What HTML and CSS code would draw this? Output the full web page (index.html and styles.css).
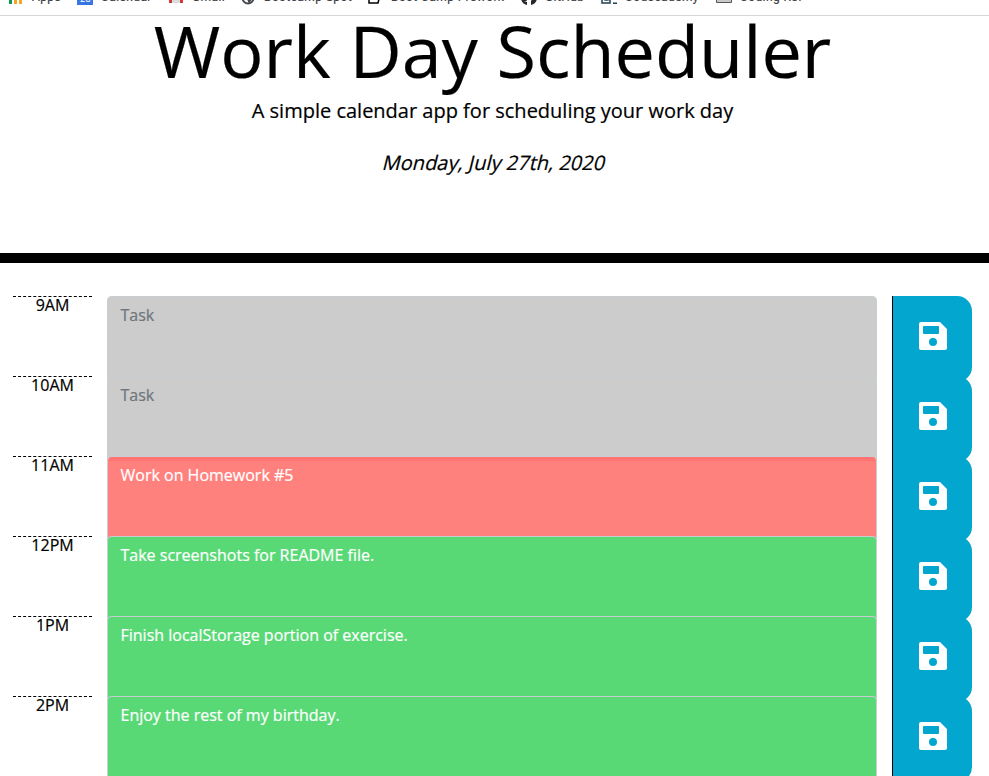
FILE: index.html
```
<!DOCTYPE html>
<html lang="en">
<head>
<meta charset="utf-8">
<title>Work Day Scheduler</title>
<link rel="stylesheet" href="styles.css">
</head>
<body>
<svg width="0" height="0" class="defs"><symbol id="save" viewBox="0 0 28 28"><path fill-rule="evenodd" d="M2 0H21L28 7V26a2 2 0 0 1-2 2H2a2 2 0 0 1-2-2V2a2 2 0 0 1 2-2ZM5 4a1 1 0 0 0-1 1v6a1 1 0 0 0 1 1H19a1 1 0 0 0 1-1V5a1 1 0 0 0-1-1ZM14 16a4 4 0 1 0 0 8a4 4 0 0 0 0-8Z"/></symbol></svg>
<nav class="bookmarks">
  <span class="bm apps"><svg viewBox="0 0 16 16"><path fill="#0b9a5b" d="M1 0h3v12H1z"/><path fill="#f4a52a" d="M6 0h3v12H6zM11 0h3v12h-3z"/></svg>Apps</span>
  <span class="bm cal"><svg viewBox="0 0 16 16"><path fill="#3875e4" d="M0 0h16v13H0z"/><text x="3" y="10" font-size="9" fill="#fff">28</text></svg>Calendar</span>
  <span class="bm gmail"><svg viewBox="0 0 16 16"><path fill="#ddd" d="M1 0h14v11H1z"/><path fill="#d33b32" d="M1 0h3v11H1zM12 0h3v11h-3z"/></svg>Gmail</span>
  <span class="bm boot"><svg viewBox="0 0 16 16"><circle cx="8" cy="6" r="5.5" fill="#fff" stroke="#45484d" stroke-width="2"/><path fill="#45484d" d="M7 7h5l-3 5z"/></svg>Bootcamp Spot</span>
  <span class="bm prework"><svg viewBox="0 0 16 16"><path fill="none" stroke="#000" stroke-width="1.5" d="M2 7v4h9l1-4"/></svg>Boot Camp Prework</span>
  <span class="bm github"><svg viewBox="0 0 16 16"><path fill="#24292e" d="M0 5a8 8 0 0 0 6 8v-3L3 9l3 0-2-3V2h8v4l-2 3v4a8 8 0 0 0 6-8z"/></svg>GitHub</span>
  <span class="bm code"><svg viewBox="0 0 16 16"><path fill="none" stroke="#1f4056" stroke-width="1.5" d="M1 2v9h8V2M4 5h3v3H4z"/><path fill="#1f4056" d="M12 10.500h4v1.500h-4z"/></svg>Codecademy</span>
  <span class="bm ref"><svg viewBox="0 0 16 16"><path fill="#c9c9c9" stroke="#555" d="M.5 2h15v8.500H.5z"/></svg>Coding Ref</span>
</nav>
<header class="hero">
  <h1>Work Day Scheduler</h1>
  <p class="lead">A simple calendar app for scheduling your work day</p>
  <p class="lead date">Monday, July 27th, 2020</p>
</header>
<main class="schedule">
  <section class="row"><div class="hour">9AM</div><div class="task past"><span class="placeholder">Task</span></div><button class="save" aria-label="Save"><svg><use href="#save"/></svg></button></section>
  <section class="row"><div class="hour">10AM</div><div class="task past"><span class="placeholder">Task</span></div><button class="save" aria-label="Save"><svg><use href="#save"/></svg></button></section>
  <section class="row"><div class="hour">11AM</div><div class="task present">Work on Homework #5</div><button class="save" aria-label="Save"><svg><use href="#save"/></svg></button></section>
  <section class="row"><div class="hour">12PM</div><div class="task future">Take screenshots for README file.</div><button class="save" aria-label="Save"><svg><use href="#save"/></svg></button></section>
  <section class="row"><div class="hour">1PM</div><div class="task future">Finish localStorage portion of exercise.</div><button class="save" aria-label="Save"><svg><use href="#save"/></svg></button></section>
  <section class="row"><div class="hour">2PM</div><div class="task future">Enjoy the rest of my birthday.</div><button class="save" aria-label="Save"><svg><use href="#save"/></svg></button></section>
</main>
</body>
</html>
```
FILE: styles.css
```
* { box-sizing: border-box; }
body { margin: 0; height: 776px; overflow: hidden; background: #fff; color: #000; font: 16px/24px "Open Sans", sans-serif; -webkit-text-stroke: .2px; }
.defs { display: block; }
.bookmarks { display: flex; height: 16px; overflow: hidden; border-bottom: 1px solid #d5d6d8; font: 12px/16px Roboto, sans-serif; color: #3c4043; letter-spacing: .4px; }
.bm { display: flex; gap: 8px; height: 16px; margin-top: -11px; padding-left: 8px; white-space: nowrap; flex: none; }
.bm svg { width: 16px; height: 16px; margin-top: 3px; }
.apps { width: 69px; }
.cal { width: 91px; }
.gmail { width: 72px; }
.boot { width: 127px; }
.prework { width: 154px; }
.github { width: 80px; }
.code { width: 115px; }
.hero { display: flow-root; height: 247px; border-bottom: 10px solid #000; text-align: center; padding-right: 4px; }
h1 { margin: -9px 0 3px; font-size: 72px; line-height: 86px; font-weight: 400; }
.lead { margin: 0 0 22px; font-size: 20px; line-height: 30px; }
/* Slanted upright face keeps the regular letter widths. */
.date { transform: translateX(2px) skewX(-14deg); }
.schedule { padding: 33px 17px 0 13px; }
.row { display: grid; grid-template-columns: 79px 770px 80px; column-gap: 15px; height: 80px; }
.hour { height: 80px; text-align: center; line-height: 17px; border-top: 1px dashed #000; }
.task { height: 86px; padding: 6px 13px 6px 12.500px; border: 1px solid #c8cdd1; border-radius: 4px; color: #fff; background-clip: padding-box; }
.past { background-color: #ccc; }
.placeholder { color: #6c757d; }
.present { background: linear-gradient(#ff7473 4px, #ff817e 4px) padding-box; }
.future { background-color: #59d976; }
.save { width: 80px; height: 86px; border: 0; border-left: 1px solid #000; border-radius: 0 15px 15px 0; background: #02a6ce; background-clip: padding-box; padding: 0 0 6px; display: flex; align-items: center; justify-content: center; }
.save svg { width: 28px; height: 28px; fill: #fff; }
```
